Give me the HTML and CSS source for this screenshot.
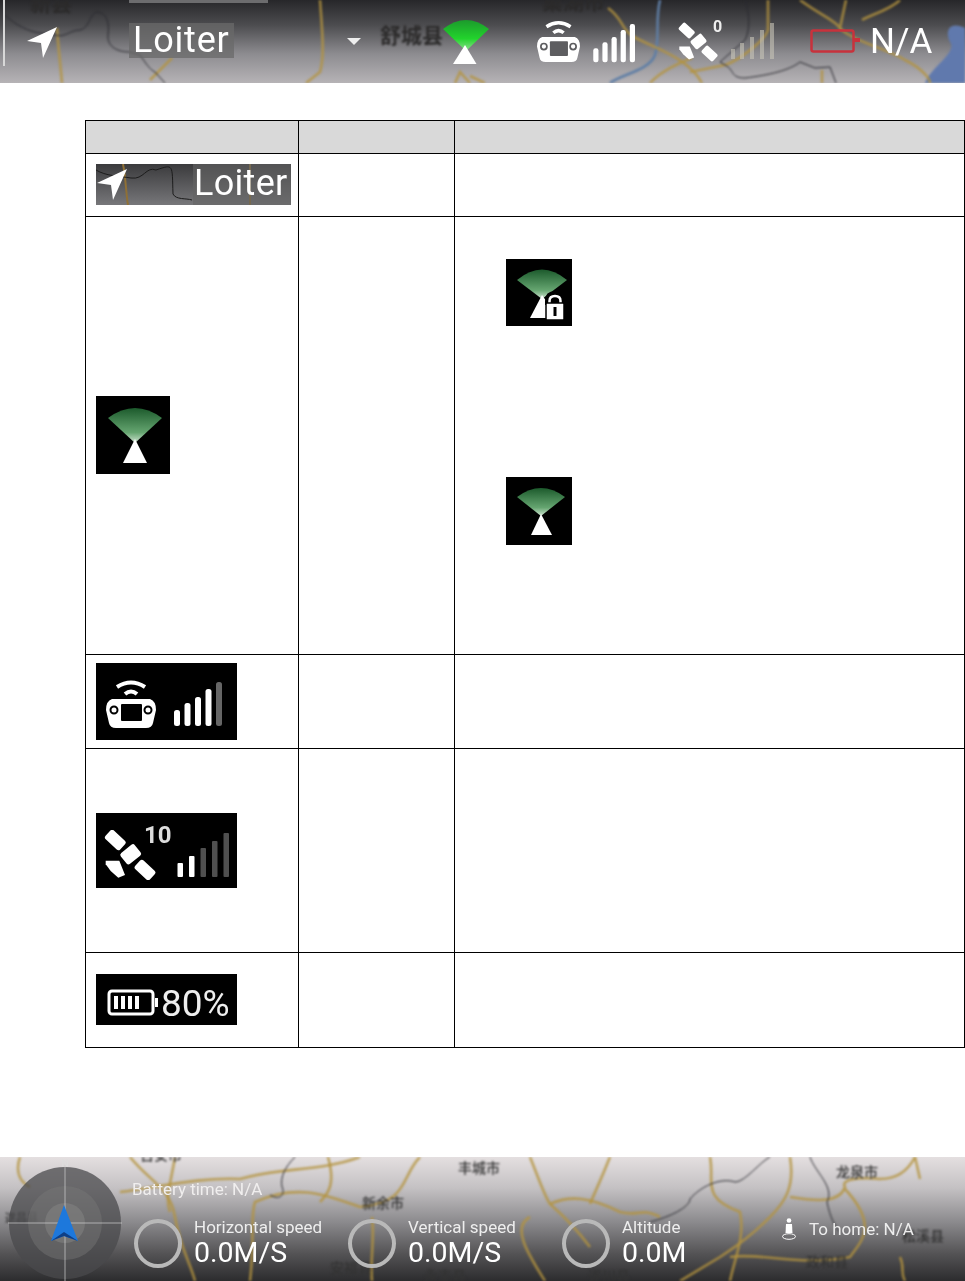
FILE: index.html
```html
<!DOCTYPE html>
<html lang="en">
<head>
<meta charset="utf-8">
<title>Status bar reference</title>
<link rel="stylesheet" href="styles.css">
</head>
<body>
<svg class="defs" width="0" height="0" aria-hidden="true">
  <defs>
    <linearGradient id="fanDim" x1="0" y1="0" x2="0" y2="1">
      <stop offset="0" stop-color="#1c5a2c"/><stop offset=".7" stop-color="#65a570"/><stop offset="1" stop-color="#d0e4d2"/>
    </linearGradient>
    <linearGradient id="fanBright" x1="0" y1="0" x2="0" y2="1">
      <stop offset="0" stop-color="#1c9a2c"/><stop offset=".6" stop-color="#22d32c"/><stop offset="1" stop-color="#8fe08f"/>
    </linearGradient>
    <symbol id="arrow" viewBox="0 0 30 31">
      <path d="M0 14 L30 0 L16 31 L14 16 Z" fill="#fff"/>
    </symbol>
    <symbol id="bars5" viewBox="0 0 50 46">
      <rect x="0" y="28" width="6" height="16" rx="2.500" fill="#fff"/>
      <rect x="10.500" y="21" width="6" height="23" rx="2.500" fill="#fff"/>
      <rect x="21" y="15" width="6" height="29" rx="2.500" fill="#fff"/>
      <rect x="31.500" y="7" width="6" height="37" rx="2.500" fill="#fff"/>
      <rect x="42" y="0" width="6" height="44" rx="2.500" fill="currentColor"/>
    </symbol>
    <symbol id="controller" viewBox="0 0 50 50">
      <path d="M11 9 Q25 0 39 9" fill="none" stroke="#fff" stroke-width="4"/>
      <path d="M19 16 Q25 11 31 16" fill="none" stroke="#fff" stroke-width="4"/>
      <path d="M6 21 H44 Q50 23 50 32 L47 45 Q46 50 40 50 H10 Q4 50 3 45 L0 32 Q0 23 6 21 Z" fill="#fff"/>
      <rect x="15" y="26" width="21" height="17" fill="currentColor" rx="1"/>
      <circle cx="8" cy="32" r="3.500" fill="none" stroke="currentColor" stroke-width="2"/>
      <circle cx="42" cy="32" r="3.500" fill="none" stroke="currentColor" stroke-width="2"/>
    </symbol>
    <symbol id="satellite" viewBox="0 0 52 50">
      <rect x="1.300" y="4" width="20" height="12" rx="2.500" fill="#fff" transform="rotate(43 11.300 10)"/>
      <rect x="17.700" y="17.300" width="18" height="14" rx="2.500" fill="#fff" transform="rotate(-39 26.700 24.300)"/>
      <rect x="31" y="34" width="20" height="12" rx="2.500" fill="#fff" transform="rotate(43 41 40)"/>
      <path d="M1.700 30.700 L15.300 30.700 L21 45 L14.300 47.700 L6.700 41 L1.700 34.300 Z" fill="#fff"/>
    </symbol>
  </defs>
</svg>

<header class="statusbar">
  <svg class="map" viewBox="0 0 965 83" aria-hidden="true">
    <path class="lake" d="M965 28 C948 20 945 32 950 42 C958 52 930 68 925 83 H965 Z"/>
    <path class="river" d="M660 0 C655 20 660 40 655 55 C650 70 620 75 610 83"/>
    <g class="road">
      <path d="M57 28 C58 45 60 60 62 83"/>
      <path d="M172 58 L150 80"/>
      <path d="M320 0 C322 30 325 55 320 72 L306 83"/>
      <path d="M608 8 C625 20 620 32 640 40 C660 50 690 60 702 83"/>
      <path d="M692 58 C680 62 660 72 650 83"/>
      <path d="M768 0 V30 C765 40 740 60 725 65 L690 72"/>
      <path d="M800 0 C820 15 835 20 840 28 L846 0"/>
      <path d="M840 28 C850 40 890 50 905 60 C925 70 930 80 930 83"/>
      <path d="M900 0 C890 10 870 15 862 20"/>
      <path d="M822 70 V83"/>
      <path d="M485 83 L470 76 M455 83 L460 72 L470 83"/>
    </g>
    <g class="border">
      <path d="M5 15 C15 25 30 32 40 33 L55 35 C65 38 70 30 80 30 C90 28 90 12 97 12 C105 12 110 20 108 35 C107 45 115 52 130 52 L140 55 C145 62 150 70 155 72 L165 83"/>
      <path d="M745 0 C750 15 750 30 745 40 L720 62 L725 65 C735 70 730 78 745 78 C770 75 790 70 800 62 L815 68 L830 67 L836 83"/>
    </g>
    <text class="place" x="30" y="11">新县</text>
    <text class="place" x="380" y="43">舒城县</text>
    <text class="place" x="542" y="9">巢湖市</text>
  </svg>
  <span class="mode-top"></span>
  <span class="edge"></span>
  <svg class="ic-arrow"><use href="#arrow"/></svg>
  <span class="mode">Loiter</span>
  <span class="caret"></span>
  <svg class="ic-fan" viewBox="0 0 46 46">
    <path d="M0 10 Q23 -8 46 10 L23 32 Z" fill="url(#fanBright)"/>
    <path d="M22 26 L33.500 45 H10 Z" fill="#fff"/>
  </svg>
  <svg class="ic-ctrl"><use href="#controller" color="#5d5d60"/></svg>
  <svg class="ic-bars"><use href="#bars5" color="#fff"/></svg>
  <svg class="ic-sat" viewBox="0 0 46 46">
    <use href="#satellite" width="40" height="40" x="0" y="6"/>
    <text class="sat-count" x="35" y="16">0</text>
  </svg>
  <svg class="ic-dimbars" viewBox="0 0 44 36">
    <rect x="0" y="26" width="4" height="10"/><rect x="9" y="20" width="4" height="16"/>
    <rect x="19" y="14" width="4" height="22"/><rect x="29" y="7" width="4" height="29"/>
    <rect x="39" y="0" width="4" height="36"/>
  </svg>
  <svg class="ic-batt" viewBox="0 0 50 24">
    <rect x="1.500" y="1.500" width="42" height="21" rx="2" fill="none" stroke="#c8323c" stroke-width="2.500"/>
    <rect x="44" y="9" width="6" height="4" fill="#c8323c"/>
  </svg>
  <span class="batt-text">N/A</span>
</header>

<table class="spec">
  <thead>
    <tr class="r-head"><th class="c1"></th><th class="c2"></th><th class="c3"></th></tr>
  </thead>
  <tbody>
    <tr class="r1">
      <td>
        <div class="tile tile-mode">
          <svg class="tile-map" viewBox="0 0 195 41" aria-hidden="true">
            <path class="t-road" d="M27 0 C30 15 30 30 32 41"/>
            <path class="t-road" d="M154 0 V41"/>
            <path class="t-border" d="M0 6 C10 12 22 12 35 14 C48 16 50 2 60 6 C78 0 76 0 77 30 C80 36 90 34 96 36"/>
          </svg>
          <svg class="tile-arrow"><use href="#arrow"/></svg>
          <span class="tile-mode-text">Loiter</span>
        </div>
      </td>
      <td></td><td></td>
    </tr>
    <tr class="r2">
      <td>
        <svg class="tile tile-fan" viewBox="0 0 74 78">
          <path d="M12 22 Q39 2 66 22 L39 47 Z" fill="url(#fanDim)"/>
          <path d="M39 43 L51 67 H27 Z" fill="#fff"/>
        </svg>
      </td>
      <td></td>
      <td class="fan-cell">
        <svg class="tile tile-fan-s fan-lock" viewBox="0 0 66 67">
          <path d="M11 21 Q36 0 61 21 L36 40 Z" fill="url(#fanDim)"/>
          <path d="M36 36 L52 59 H24 Z" fill="#fff"/>
          <path d="M42 46 V42 Q42 35 49 35 Q56 35 56 42 V46" fill="none" stroke="#000" stroke-width="6"/>
          <path d="M43.500 46 V42 Q43.500 37 49 37 Q54.500 37 54.500 42 V46" fill="none" stroke="#fff" stroke-width="2.500"/>
          <rect x="40" y="44" width="18" height="17" fill="#fff" stroke="#000" stroke-width="1.500" rx="1"/>
          <rect x="47.500" y="48" width="3" height="9" fill="#000"/>
        </svg>
        <svg class="tile tile-fan-s fan-plain" viewBox="0 0 66 68">
          <path d="M11 20 Q35 2 59 20 L35 39 Z" fill="url(#fanDim)"/>
          <path d="M35 37 L46 58 H25 Z" fill="#fff"/>
        </svg>
      </td>
    </tr>
    <tr class="r3">
      <td>
        <svg class="tile tile-wide tile-h77" viewBox="0 0 141 77">
          <use href="#controller" x="10" y="15" width="50" height="50" color="#000"/>
          <use href="#bars5" x="78" y="19" width="50" height="46" color="#666"/>
        </svg>
      </td>
      <td></td><td></td>
    </tr>
    <tr class="r4">
      <td>
        <svg class="tile tile-wide tile-h75" viewBox="0 0 141 75">
          <use href="#satellite" x="8" y="17" width="52" height="50"/>
          <text class="tile-count" x="48" y="30">10</text>
          <rect class="b-on" x="81.500" y="50" width="5.500" height="14" rx="1"/>
          <rect class="b-on" x="93" y="43" width="5.500" height="21" rx="1"/>
          <rect class="b-off" x="104.500" y="35" width="5.500" height="29" rx="1"/>
          <rect class="b-off" x="116" y="28" width="5.500" height="36" rx="1"/>
          <rect class="b-off" x="127.500" y="20" width="5.500" height="44" rx="1"/>
        </svg>
      </td>
      <td></td><td></td>
    </tr>
    <tr class="r5">
      <td>
        <svg class="tile tile-wide tile-h51" viewBox="0 0 141 51">
          <rect x="13" y="17" width="44" height="23" rx="3" fill="none" stroke="#fff" stroke-width="3"/>
          <rect x="18" y="22" width="4" height="13" fill="#fff"/>
          <rect x="25" y="22" width="4" height="13" fill="#fff"/>
          <rect x="32" y="22" width="4" height="13" fill="#fff"/>
          <rect x="39" y="22" width="4" height="13" fill="#fff"/>
          <rect x="59" y="24" width="3" height="9" fill="#fff"/>
          <text class="tile-pct" x="65" y="42">80%</text>
        </svg>
      </td>
      <td></td><td></td>
    </tr>
  </tbody>
</table>

<footer class="telemetry">
  <svg class="map" viewBox="0 0 965 124" aria-hidden="true">
    <g class="road">
      <path d="M20 0 C15 15 20 25 30 30"/>
      <path d="M130 0 C150 25 170 30 175 60 C180 90 190 105 195 124"/>
      <path d="M175 0 C170 30 165 40 170 55"/>
      <path d="M120 35 C160 30 200 20 240 22 C280 10 320 15 360 0"/>
      <path d="M250 124 C255 80 250 60 255 45 C300 25 330 40 360 50 C410 45 400 20 420 0"/>
      <path d="M328 0 C335 25 330 35 320 45"/>
      <path d="M372 124 C370 100 375 80 372 60"/>
      <path d="M530 0 C540 25 545 40 550 47 C565 60 575 70 590 90"/>
      <path d="M610 0 C600 25 595 35 590 47"/>
      <path d="M550 47 C570 38 590 40 620 55 C640 60 640 50 660 60"/>
      <path d="M530 60 C510 70 530 100 545 124"/>
      <path d="M710 0 C715 25 700 40 740 55 C745 80 735 100 730 124"/>
      <path d="M790 0 C795 30 785 45 770 60 C750 80 735 90 720 100 L680 124"/>
      <path d="M790 40 C820 45 840 45 845 30 C840 22 860 20 880 22 C900 22 910 10 915 0"/>
      <path d="M915 0 L920 22"/>
      <path d="M730 100 C760 95 800 110 850 100 C860 85 880 70 845 32"/>
      <path d="M900 100 C905 110 900 115 905 124"/>
    </g>
    <g class="border">
      <path d="M295 0 C285 10 280 20 282 30 C285 35 282 45 270 38"/>
      <path d="M770 0 C760 5 745 25 735 25 C720 20 700 30 690 42 C690 50 670 60 650 65"/>
      <path d="M810 0 C815 15 835 30 827 45 C830 60 835 70 840 75"/>
    </g>
    <text class="place" x="140" y="3">吉安市</text>
    <text class="place small" x="5" y="65">遂昌县</text>
    <text class="place" x="362" y="51">新余市</text>
    <text class="place" x="458" y="16">丰城市</text>
    <text class="place" x="836" y="20">龙泉市</text>
    <text class="place" x="330" y="116">安福县</text>
    <text class="place" x="424" y="124">永丰县</text>
    <text class="place" x="588" y="124">遂川县</text>
    <text class="place" x="806" y="110">政和县</text>
    <text class="place" x="902" y="84">松溪县</text>
  </svg>
  <svg class="compass" viewBox="0 0 130 124">
    <circle cx="65" cy="66" r="56" fill="#4a4a4c" fill-opacity=".75"/>
    <circle cx="65" cy="66" r="37" fill="#777" fill-opacity=".45"/>
    <circle cx="65" cy="66" r="20" fill="#8a8a8a" fill-opacity=".45"/>
    <path class="cross" d="M65 8 V124 M8 66 H122"/>
    <text class="compass-n" x="65" y="10">N</text>
    <path d="M64 48 L78 84 L64 79 L51 84 Z" fill="#1d78dc"/>
    <path d="M51 84 L64 79 L78 84 L64 75 Z" fill="#0f3f86"/>
  </svg>
  <div class="readouts">
    <div class="battery-time">Battery time: N/A</div>
    <div class="metrics">
      <div class="metric">
        <span class="ring"></span>
        <div class="metric-text"><span class="m-label">Horizontal speed</span><span class="m-value">0.0M/S</span></div>
      </div>
      <div class="metric">
        <span class="ring"></span>
        <div class="metric-text"><span class="m-label">Vertical speed</span><span class="m-value">0.0M/S</span></div>
      </div>
      <div class="metric">
        <span class="ring"></span>
        <div class="metric-text"><span class="m-label">Altitude</span><span class="m-value">0.0M</span></div>
      </div>
      <div class="home">
        <svg class="ic-person" viewBox="0 0 14 22">
          <circle cx="7" cy="2.500" r="2.300" fill="#fff"/>
          <path d="M4 6 H10 L10.500 15 H3.500 Z" fill="#fff"/>
          <ellipse cx="7" cy="18.500" rx="6.500" ry="2.800" fill="none" stroke="#fff" stroke-width="1"/>
        </svg>
        <span class="m-label">To home: N/A</span>
      </div>
    </div>
  </div>
</footer>
</body>
</html>
```
FILE: styles.css
```css
* { box-sizing: border-box; }
html, body { margin: 0; padding: 0; }
body { width: 965px; height: 1281px; overflow: hidden; background: #fff; font-family: Roboto, "Noto Sans CJK SC", sans-serif; }
.defs { position: absolute; }

/* top status bar */
.statusbar {
  position: relative;
  height: 83px;
  display: flex;
  align-items: flex-start;
  overflow: hidden;
  background: linear-gradient(#27272a 0, #4c4c4f 30%, #8d8c90 65%, #b6b3b6 100%);
  color: #fff;
}
.statusbar > *:not(.map):not(.mode-top) { position: relative; flex: none; }
.map { position: absolute; inset: 0; width: 100%; height: 100%; filter: blur(.9px); }
.road path, .road { fill: none; stroke: #b4933f; stroke-width: 2.600; stroke-opacity: .8; }
.border path, .border { fill: none; stroke: #2a2a30; stroke-width: 1; }
.river { fill: none; stroke: #5f7ea5; stroke-width: 2.500; }
.lake { fill: #6079ad; }
.place { font-family: "Noto Sans CJK SC", sans-serif; font-size: 21px; font-weight: 700; fill: #2b2a2a; }
.telemetry .place { font-size: 14px; font-weight: 500; fill: #333; }
.telemetry .place.small { font-size: 11px; }

.mode-top { position: absolute; left: 129px; top: 0; width: 139px; height: 3px; background: #6c6c6e; }
.edge { width: 2px; height: 66px; margin-left: 3px; background: #d8d8d8; }
.ic-arrow { width: 30px; height: 31px; margin: 27px 0 0 22px; }
.mode {
  margin: 23px 0 0 72px;
  width: 105px; height: 35px;
  padding-left: 4px;
  background: rgba(105,105,105,.75);
  font-size: 36px; line-height: 34px; letter-spacing: .8px;
  filter: blur(.4px);
}
.caret { width: 0; height: 0; margin: 38px 0 0 113px; border: 7px solid transparent; border-top: 7px solid #eee; border-bottom: 0; }
.ic-fan { width: 46px; height: 46px; margin: 19px 0 0 82px; filter: blur(.5px); }
.ic-ctrl { width: 43px; height: 43px; margin: 19px 0 0 48px; filter: blur(.4px); }
.ic-bars { width: 44px; height: 40px; margin: 24px 0 0 13px; filter: blur(.4px); }
.ic-sat { width: 46px; height: 46px; margin: 16px 0 0 41px; overflow: visible; filter: blur(.4px); }
.sat-count { font-family: Roboto, sans-serif; font-size: 16px; font-weight: 700; fill: #eee; }
.ic-dimbars { width: 44px; height: 36px; margin: 23px 0 0 7px; fill: #c8c4b8; fill-opacity: .6; filter: blur(.4px); }
.ic-batt { width: 50px; height: 24px; margin: 29px 0 0 35px; filter: blur(.4px); }
.batt-text { margin: 24px 0 0 10px; font-size: 35px; line-height: 36px; filter: blur(.3px); }

/* reference table */
.spec {
  margin: 37px 0 0 85px;
  width: 880px;
  height: 927px;
  border-collapse: collapse;
  table-layout: fixed;
}
.spec th, .spec td { border: 1px solid #000; padding: 0 0 0 10px; vertical-align: middle; }
.spec th { background: #d9d9d9; }
.c1 { width: 213px; }
.c2 { width: 156px; }
.r-head { height: 33px; }
.r1 { height: 63px; }
.r2 { height: 438px; }
.r3 { height: 94px; }
.r4 { height: 204px; }
.r5 { height: 95px; }
.r1 td, .r2 td, .r5 td { padding-bottom: 2px; }

.tile { display: block; background: #000; filter: blur(.4px); }
.tile-mode {
  position: relative;
  width: 195px; height: 41px;
  display: flex; align-items: center;
  background: linear-gradient(#3a3a3c, #77777a);
  color: #fff;
  overflow: hidden;
}
.tile-map { position: absolute; inset: 0; width: 100%; height: 100%; filter: blur(.4px); }
.t-road { fill: none; stroke: #8f7036; stroke-width: 2; }
.t-border { fill: none; stroke: #1c1c1c; stroke-width: 1; }
.tile-arrow { position: relative; width: 30px; height: 31px; margin-left: 1px; }
.tile-mode-text {
  position: absolute; right: 0; top: 0; bottom: 0;
  width: 98px; padding-left: 1px;
  background: rgba(100,100,100,.6);
  font-size: 36px; line-height: 38px; letter-spacing: .3px;
  white-space: nowrap;
}
.tile-fan { width: 74px; height: 78px; }
.tile-fan-s { width: 66px; }
.fan-cell { vertical-align: top !important; padding: 0 0 0 51px !important; }
.fan-lock { height: 67px; margin-top: 42px; }
.fan-plain { height: 68px; margin-top: 151px; }
.tile-wide { width: 141px; }
.tile-h77 { height: 77px; }
.tile-h75 { height: 75px; }
.tile-h51 { height: 51px; }
.tile-count { font-family: Roboto, sans-serif; font-size: 24px; font-weight: 700; fill: #ddd; }
.b-on { fill: #fff; }
.b-off { fill: #505050; }
.tile-pct { font-family: Roboto, sans-serif; font-size: 37px; fill: #eee; }

/* bottom telemetry bar */
.telemetry {
  position: relative;
  margin-top: 109px;
  height: 124px;
  display: flex;
  overflow: hidden;
  background: linear-gradient(#e4dfe0 0, #c4c1c3 25%, #8c8b8e 52%, #545355 78%, #2c2c2e 100%);
  color: #fff;
}
.compass { position: relative; flex: none; width: 130px; height: 124px; filter: blur(.5px); }
.cross { stroke: #cfcfcf; stroke-width: 1; stroke-opacity: .7; fill: none; }
.compass-n { font-size: 10px; fill: #ddd; text-anchor: middle; font-family: Roboto, sans-serif; }
.readouts { position: relative; flex: 1; display: flex; flex-direction: column; padding: 22px 0 0 4px; filter: blur(.3px); }
.battery-time { font-size: 17px; line-height: 20px; margin-left: -2px; color: #f0eeee; }
.metrics { display: flex; margin-top: 19px; }
.metric { flex: none; width: 214px; display: flex; align-items: center; gap: 12px; }
.ring { flex: none; width: 48px; height: 49px; border: 4px solid #b9b9b9; border-radius: 50%; }
.metric-text { display: flex; flex-direction: column; margin-top: -2px; }
.m-label { font-size: 17px; line-height: 22px; color: #eee; white-space: nowrap; }
.m-value { font-size: 28.500px; line-height: 30px; white-space: nowrap; }
.home { display: flex; align-items: flex-start; gap: 13px; margin: 0 0 0 6px; }
.ic-person { width: 14px; height: 22px; }
```
